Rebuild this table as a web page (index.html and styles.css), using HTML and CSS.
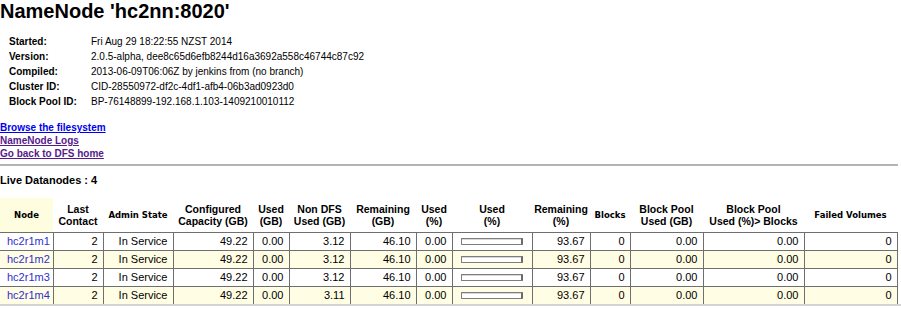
FILE: index.html
```html
<!DOCTYPE html>
<html>
<head>
<meta charset="utf-8">
<title>NameNode 'hc2nn:8020'</title>
<link rel="stylesheet" href="styles.css">
</head>
<body>
<h1 class="title">NameNode 'hc2nn:8020'</h1>
<div class="info">
  <div class="lbl">Started:</div><div class="val">Fri Aug 29 18:22:55 NZST 2014</div>
  <div class="lbl">Version:</div><div class="val">2.0.5-alpha, dee8c65d6efb8244d16a3692a558c46744c87c92</div>
  <div class="lbl">Compiled:</div><div class="val">2013-06-09T06:06Z by jenkins from (no branch)</div>
  <div class="lbl">Cluster ID:</div><div class="val">CID-28550972-df2c-4df1-afb4-06b3ad0923d0</div>
  <div class="lbl">Block Pool ID:</div><div class="val">BP-76148899-192.168.1.103-1409210010112</div>
</div>
<div class="links">
  <a class="link fresh" href="#">Browse the filesystem</a>
  <a class="link visited" href="#">NameNode Logs</a>
  <a class="link visited" href="#">Go back to DFS home</a>
</div>
<div class="rule"></div>
<div class="live">Live Datanodes : 4</div>
<table class="nodes">
  <colgroup>
    <col style="width:53px"><col style="width:50px"><col style="width:70px"><col style="width:80px">
    <col style="width:36px"><col style="width:61px"><col style="width:66px"><col style="width:36px">
    <col style="width:80px"><col style="width:58px"><col style="width:40px"><col style="width:73px">
    <col style="width:101px"><col style="width:93px">
  </colgroup>
  <thead>
    <tr>
      <th class="small node-h">Node</th>
      <th>Last<br>Contact</th>
      <th class="small">Admin State</th>
      <th>Configured<br>Capacity (GB)</th>
      <th>Used<br>(GB)</th>
      <th>Non DFS<br>Used (GB)</th>
      <th>Remaining<br>(GB)</th>
      <th>Used<br>(%)</th>
      <th>Used<br>(%)</th>
      <th>Remaining<br>(%)</th>
      <th class="small">Blocks</th>
      <th>Block Pool<br>Used (GB)</th>
      <th>Block Pool<br>Used (%)&gt; Blocks</th>
      <th class="small">Failed Volumes</th>
    </tr>
  </thead>
  <tbody>
    <tr>
      <td class="name"><a href="#">hc2r1m1</a></td><td>2</td><td>In Service</td><td>49.22</td><td>0.00</td><td>3.12</td><td>46.10</td><td>0.00</td><td class="barcell"><div class="bar"></div></td><td>93.67</td><td>0</td><td>0.00</td><td>0.00</td><td>0</td>
    </tr>
    <tr class="alt">
      <td class="name"><a href="#">hc2r1m2</a></td><td>2</td><td>In Service</td><td>49.22</td><td>0.00</td><td>3.12</td><td>46.10</td><td>0.00</td><td class="barcell"><div class="bar"></div></td><td>93.67</td><td>0</td><td>0.00</td><td>0.00</td><td>0</td>
    </tr>
    <tr>
      <td class="name"><a href="#">hc2r1m3</a></td><td>2</td><td>In Service</td><td>49.22</td><td>0.00</td><td>3.12</td><td>46.10</td><td>0.00</td><td class="barcell"><div class="bar"></div></td><td>93.67</td><td>0</td><td>0.00</td><td>0.00</td><td>0</td>
    </tr>
    <tr class="alt">
      <td class="name"><a href="#">hc2r1m4</a></td><td>2</td><td>In Service</td><td>49.22</td><td>0.00</td><td>3.11</td><td>46.10</td><td>0.00</td><td class="barcell"><div class="bar"></div></td><td>93.67</td><td>0</td><td>0.00</td><td>0.00</td><td>0</td>
    </tr>
  </tbody>
</table>
<div class="bottom-line"></div>
</body>
</html>
```
FILE: styles.css
```css
html, body {
  margin: 0;
  padding: 0;
  background: #ffffff;
  color: #000000;
  font-family: "Liberation Sans", Arial, sans-serif;
}

.title {
  margin: 0;
  font-size: 20px;
  line-height: 22px;
  font-weight: bold;
}

.info {
  display: grid;
  grid-template-columns: 82px auto;
  padding-left: 9px;
  margin-top: 12px;
  font-size: 10px;
  line-height: 15px;
}

.lbl {
  font-weight: bold;
}

.links {
  display: flex;
  flex-direction: column;
  align-items: flex-start;
  margin-top: 12px;
}

.link {
  font-size: 10px;
  line-height: 13px;
  font-weight: bold;
  text-decoration: underline;
}

.fresh {
  color: #0000ee;
}

.visited {
  color: #551a8b;
}

.rule {
  margin-top: 4px;
  width: 898px;
  height: 2px;
  background: #b4b4b4;
}

.live {
  margin-top: 7px;
  font-size: 11px;
  line-height: 14px;
  font-weight: bold;
}

.nodes {
  margin-top: 11px;
  width: 897px;
  table-layout: fixed;
  border-collapse: collapse;
  font-size: 11px;
}

.nodes th {
  height: 34px;
  padding: 0;
  font-size: 10.5px;
  line-height: 12px;
  font-weight: bold;
  text-align: center;
  vertical-align: middle;
}

.nodes th.small {
  font-family: "DejaVu Sans", Verdana, sans-serif;
  font-size: 8.5px;
}

.nodes th.node-h {
  background: #fffde0;
}

.nodes td {
  height: 17px;
  padding: 0 5px 0 4px;
  line-height: 17px;
  text-align: right;
  border-top: 1px solid #6f6f6f;
  border-left: 1px solid #6f6f6f;
  white-space: nowrap;
}

.nodes td:first-child {
  border-left: none;
}

.nodes td:last-child {
  border-right: 1px solid #6f6f6f;
}

.nodes td.name {
  text-align: left;
  padding-left: 7px;
}

.nodes td.name a {
  color: #2f2fd0;
  text-decoration: none;
}

.nodes tr.alt td {
  background: #fffde3;
}

.nodes td.barcell {
  padding-left: 8px;
}

.bar {
  width: 59px;
  height: 5px;
  border: 1px solid #7d7d7d;
  border-right: 2px solid #6a6a6a;
  border-radius: 1px;
  background: #ffffff;
  box-shadow: inset 0 1px 0 #d8d8d8;
}

.bottom-line {
  height: 2px;
  background: #d4d4d4;
}
```
